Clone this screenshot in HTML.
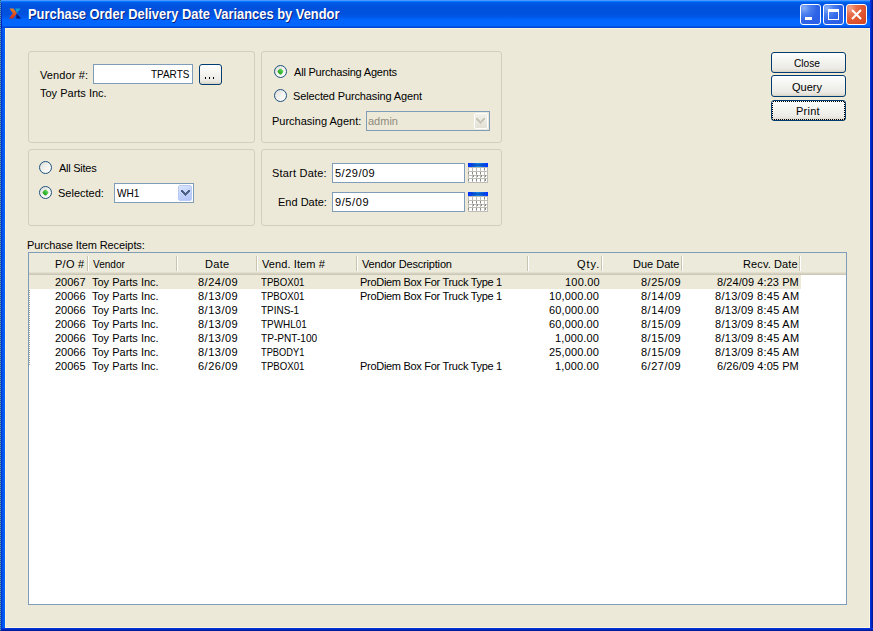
<!DOCTYPE html>
<html><head><meta charset="utf-8">
<style>
*{box-sizing:border-box;margin:0;padding:0}
html,body{width:873px;height:631px;overflow:hidden;background:#ECE9D8}
body{position:relative;font-family:"Liberation Sans",sans-serif;font-size:11px;color:#000}
.a{position:absolute}
.t{position:absolute;white-space:pre;line-height:14px;font-size:11px}
#frame{left:0;top:0;width:873px;height:631px;background:#0055E5}
#lb{left:0;top:28px;width:5px;height:603px;background:linear-gradient(90deg,#001ccf 0,#001ccf 1px,#0038dc 1px,#0038dc 2px,#0050e8 2px,#0050e8 3px,#005ff8 3px,#005ff8 5px)}
#dots{left:0;top:0;width:1px;height:631px;background:repeating-linear-gradient(180deg,#1E5A8E 0,#1E5A8E 1px,#5C9AD0 1px,#5C9AD0 2px)}
#rb{left:870px;top:0;width:3px;height:631px;background:linear-gradient(90deg,#0034e0 0,#0034e0 1px,#0026bf 1px,#0026bf 2px,#001a9a 2px,#001a9a 3px)}
#bb{left:1px;top:628px;width:872px;height:3px;background:linear-gradient(180deg,#0034dd 0,#0034dd 1px,#0028c0 1px,#0028c0 2px,#001a9e 2px)}
#title{left:0;top:0;width:873px;height:28px;background:linear-gradient(180deg,#4b97ff 0,#4b97ff 1px,#0a77ff 1px,#0a77ff 2px,#0060f2 2px,#0055e2 4px,#0051dc 8px,#0052de 14px,#0058ea 17px,#0066ff 20px,#0066ff 26px,#0046d4 27px,#0046d4 28px)}
#client{left:5px;top:28px;width:865px;height:600px;background:#ECE9D8;border:1px solid #FBF4DC}
.grp{position:absolute;border:1px solid #D0D0BF;border-radius:3px}
.inp{position:absolute;background:#fff;border:1px solid #7F9DB9}
.btn{position:absolute;border:1px solid #003C74;border-radius:3px;background:linear-gradient(180deg,#fff 0,#F4F4F0 40%,#ECEBE6 80%,#E3E0D5 92%,#D6D0C5 100%);box-shadow:0 0 0 1px rgba(255,240,200,.35)}
.radio{position:absolute;width:13px;height:13px;border-radius:50%;border:1px solid #1C5180;background:linear-gradient(135deg,#DCDCD7 0,#F2F2EE 50%,#fff 100%)}
.radio.on::after{content:"";position:absolute;left:3px;top:3px;width:5px;height:5px;border-radius:1.5px;transform:rotate(45deg);background:linear-gradient(180deg,#6BD866,#18A015)}
.tb{position:absolute;top:4px;width:21px;height:21px;border:1px solid #fff;border-radius:3px}
.tbb{background:radial-gradient(circle at 3px 3px,#8AB0F8 0,#4E82F0 6px,#2E63E6 13px,#2A5FE8 100%)}
.hsep{position:absolute;top:256px;width:2px;height:15px;background:linear-gradient(90deg,#C7C5B2 0,#C7C5B2 1px,#fff 1px)}
</style></head><body>
<div id="frame" class="a"></div>
<div id="title" class="a"></div>
<div id="lb" class="a"></div>
<div id="dots" class="a"></div>
<div class="a" style="left:1px;top:3px;width:1px;height:25px;background:linear-gradient(180deg,#0040d8,#0018c0)"></div>
<div id="rb" class="a"></div>
<div id="bb" class="a"></div>
<div id="client" class="a"></div>

<svg class="a" style="left:9px;top:8px" width="13" height="11" viewBox="0 -0.5 13 11">
<defs><linearGradient id="og" x1="0" y1="0" x2="0" y2="1"><stop offset="0" stop-color="#EC8420"/><stop offset="1" stop-color="#D82818"/></linearGradient></defs>
<polygon points="0.5,0 4.5,0 8,4.8 4,10 0,10 3.8,4.8" fill="url(#og)"/>
<polygon points="6.4,0 11.6,0 7.8,4.8" fill="#18A0D0"/>
<polygon points="7.4,5.2 12.4,10 7.4,10" fill="#0A1A78"/>
</svg>
<div class="t" style="left:28px;top:6px;font-weight:bold;font-size:14px;line-height:16px;transform:scaleX(0.92);transform-origin:0 0;color:#fff;text-shadow:1px 1px 0 #0A1E7A">Purchase Order Delivery Date Variances by Vendor</div>

<div class="tb tbb" style="left:800px"><div class="a" style="left:4px;top:12px;width:7px;height:3px;background:#fff"></div></div>
<div class="tb tbb" style="left:823px"><div class="a" style="left:4px;top:4px;width:11px;height:11px;border:1px solid #fff;border-top-width:3px"></div></div>
<div class="tb" style="left:846px;background:radial-gradient(circle at 3px 3px,#F4A890 0,#E8704E 6px,#E25A34 12px,#D0421C 100%)">
<svg class="a" style="left:4px;top:4px" width="11" height="11" viewBox="0 0 11 11"><path d="M1 1L10 10M10 1L1 10" stroke="#fff" stroke-width="2"/></svg></div>

<div class="grp" style="left:28px;top:51px;width:227px;height:92px"></div>
<div class="grp" style="left:261px;top:51px;width:241px;height:92px"></div>
<div class="grp" style="left:28px;top:149px;width:227px;height:77px"></div>
<div class="grp" style="left:261px;top:149px;width:241px;height:77px"></div>

<div class="inp" style="left:93px;top:64px;width:100px;height:20px"></div>
<div class="btn" style="left:199px;top:64px;width:23px;height:21px"><div class="a" style="left:5px;top:12px;width:1px;height:2px;background:#000"></div><div class="a" style="left:9px;top:12px;width:1px;height:2px;background:#000"></div><div class="a" style="left:13px;top:12px;width:1px;height:2px;background:#000"></div></div>

<div class="radio on" style="left:274px;top:65px"></div>
<div class="radio" style="left:274px;top:89px"></div>
<div class="inp" style="left:366px;top:111px;width:124px;height:20px;background:#ECE9D8"></div>
<div class="a" style="left:474px;top:113px;width:14px;height:16px;border:1px solid #fff;border-radius:2px;background:linear-gradient(180deg,#F2F1EA,#E3E1D6)"></div>
<svg class="a" style="left:476px;top:118px" width="9" height="6" shape-rendering="crispEdges"><rect x="0" y="0" width="2" height="1" fill="#C9C7BA"/><rect x="7" y="0" width="2" height="1" fill="#C9C7BA"/><rect x="0" y="1" width="3" height="1" fill="#C9C7BA"/><rect x="6" y="1" width="3" height="1" fill="#C9C7BA"/><rect x="1" y="2" width="3" height="1" fill="#C9C7BA"/><rect x="5" y="2" width="3" height="1" fill="#C9C7BA"/><rect x="2" y="3" width="5" height="1" fill="#C9C7BA"/><rect x="3" y="4" width="3" height="1" fill="#C9C7BA"/><rect x="4" y="5" width="1" height="1" fill="#C9C7BA"/></svg>

<div class="radio" style="left:39px;top:161px"></div>
<div class="radio on" style="left:39px;top:186px"></div>
<div class="inp" style="left:114px;top:183px;width:80px;height:20px"></div>
<div class="a" style="left:178px;top:185px;width:14px;height:16px;border:1px solid #BACCF6;border-radius:2px;background:linear-gradient(160deg,#DCE6FE 0,#C6D5FB 40%,#B3C6F8 100%)"></div>
<svg class="a" style="left:181px;top:190px" width="9" height="6" shape-rendering="crispEdges"><rect x="0" y="0" width="2" height="1" fill="#4D6185"/><rect x="7" y="0" width="2" height="1" fill="#4D6185"/><rect x="0" y="1" width="3" height="1" fill="#4D6185"/><rect x="6" y="1" width="3" height="1" fill="#4D6185"/><rect x="1" y="2" width="3" height="1" fill="#4D6185"/><rect x="5" y="2" width="3" height="1" fill="#4D6185"/><rect x="2" y="3" width="5" height="1" fill="#4D6185"/><rect x="3" y="4" width="3" height="1" fill="#4D6185"/><rect x="4" y="5" width="1" height="1" fill="#4D6185"/></svg>

<div class="inp" style="left:332px;top:163px;width:133px;height:20px"></div>
<div class="inp" style="left:332px;top:192px;width:133px;height:20px"></div>
<svg class="a" style="left:468px;top:163px" width="20" height="20" viewBox="0 0 20 20" shape-rendering="crispEdges"><defs><linearGradient id="cg" x1="0" y1="0" x2="1" y2="0"><stop offset="0" stop-color="#0028F8"/><stop offset=".5" stop-color="#1488E0"/><stop offset="1" stop-color="#0030FF"/></linearGradient></defs><rect x="0" y="0" width="20" height="20" fill="#fff"/><rect x="0" y="0" width="20" height="4" fill="url(#cg)"/><rect x="3" y="1" width="14" height="2" fill="#0A3AA0" opacity=".45"/><rect x="0" y="4" width="20" height="1" fill="#BDBDB5"/><rect x="0" y="8" width="20" height="1" fill="#BDBDB5"/><rect x="0" y="12" width="20" height="1" fill="#BDBDB5"/><rect x="0" y="15" width="20" height="1" fill="#BDBDB5"/><rect x="0" y="19" width="20" height="1" fill="#BDBDB5"/><rect x="0" y="4" width="1" height="16" fill="#BDBDB5"/><rect x="4" y="4" width="1" height="16" fill="#BDBDB5"/><rect x="8" y="4" width="1" height="16" fill="#BDBDB5"/><rect x="12" y="4" width="1" height="16" fill="#BDBDB5"/><rect x="16" y="4" width="1" height="16" fill="#BDBDB5"/><rect x="19" y="4" width="1" height="16" fill="#BDBDB5"/><rect x="16" y="5" width="1" height="2" fill="#8A8A86"/><rect x="0" y="9" width="1" height="2" fill="#8A8A86"/><rect x="4" y="9" width="1" height="2" fill="#8A8A86"/><rect x="8" y="9" width="1" height="2" fill="#8A8A86"/><rect x="12" y="9" width="1" height="2" fill="#8A8A86"/><rect x="5" y="12" width="1" height="2" fill="#8A8A86"/><rect x="9" y="12" width="1" height="2" fill="#8A8A86"/><rect x="13" y="12" width="1" height="2" fill="#8A8A86"/><rect x="17" y="12" width="1" height="2" fill="#8A8A86"/><rect x="0" y="16" width="1" height="2" fill="#8A8A86"/><rect x="4" y="16" width="1" height="2" fill="#8A8A86"/><rect x="8" y="16" width="1" height="2" fill="#8A8A86"/><rect x="12" y="16" width="1" height="2" fill="#8A8A86"/><rect x="17" y="16" width="1" height="2" fill="#8A8A86"/></svg><svg class="a" style="left:468px;top:192px" width="20" height="20" viewBox="0 0 20 20" shape-rendering="crispEdges"><defs><linearGradient id="cg" x1="0" y1="0" x2="1" y2="0"><stop offset="0" stop-color="#0028F8"/><stop offset=".5" stop-color="#1488E0"/><stop offset="1" stop-color="#0030FF"/></linearGradient></defs><rect x="0" y="0" width="20" height="20" fill="#fff"/><rect x="0" y="0" width="20" height="4" fill="url(#cg)"/><rect x="3" y="1" width="14" height="2" fill="#0A3AA0" opacity=".45"/><rect x="0" y="4" width="20" height="1" fill="#BDBDB5"/><rect x="0" y="8" width="20" height="1" fill="#BDBDB5"/><rect x="0" y="12" width="20" height="1" fill="#BDBDB5"/><rect x="0" y="15" width="20" height="1" fill="#BDBDB5"/><rect x="0" y="19" width="20" height="1" fill="#BDBDB5"/><rect x="0" y="4" width="1" height="16" fill="#BDBDB5"/><rect x="4" y="4" width="1" height="16" fill="#BDBDB5"/><rect x="8" y="4" width="1" height="16" fill="#BDBDB5"/><rect x="12" y="4" width="1" height="16" fill="#BDBDB5"/><rect x="16" y="4" width="1" height="16" fill="#BDBDB5"/><rect x="19" y="4" width="1" height="16" fill="#BDBDB5"/><rect x="16" y="5" width="1" height="2" fill="#8A8A86"/><rect x="0" y="9" width="1" height="2" fill="#8A8A86"/><rect x="4" y="9" width="1" height="2" fill="#8A8A86"/><rect x="8" y="9" width="1" height="2" fill="#8A8A86"/><rect x="12" y="9" width="1" height="2" fill="#8A8A86"/><rect x="5" y="12" width="1" height="2" fill="#8A8A86"/><rect x="9" y="12" width="1" height="2" fill="#8A8A86"/><rect x="13" y="12" width="1" height="2" fill="#8A8A86"/><rect x="17" y="12" width="1" height="2" fill="#8A8A86"/><rect x="0" y="16" width="1" height="2" fill="#8A8A86"/><rect x="4" y="16" width="1" height="2" fill="#8A8A86"/><rect x="8" y="16" width="1" height="2" fill="#8A8A86"/><rect x="12" y="16" width="1" height="2" fill="#8A8A86"/><rect x="17" y="16" width="1" height="2" fill="#8A8A86"/></svg>

<div class="btn" style="left:771px;top:52px;width:75px;height:21px"></div>
<div class="btn" style="left:771px;top:75px;width:75px;height:22px"></div>
<div class="btn" style="left:771px;top:100px;width:75px;height:21px"><svg class="a" style="left:0;top:0" width="73" height="19" shape-rendering="crispEdges"><rect x="0.5" y="0.5" width="72" height="18" fill="none" stroke="#000" stroke-dasharray="1 1"/></svg></div>

<div class="a" style="left:28px;top:252px;width:819px;height:353px;border:1px solid #7F9DB9;background:#fff"></div>
<div class="a" style="left:29px;top:253px;width:817px;height:19px;background:#EBEADB"></div>
<div class="a" style="left:29px;top:272px;width:817px;height:3px;background:linear-gradient(180deg,#E2DFCF 0,#E2DFCF 1px,#D6D3C2 1px,#D6D3C2 2px,#CBC7B6 2px)"></div>
<div class="a" style="left:29px;top:275px;width:772px;height:14px;background:#ECE9D8"></div>
<div class="a" style="left:29px;top:290px;width:1px;height:76px;background:repeating-linear-gradient(180deg,#A8A491 0,#A8A491 1px,transparent 1px,transparent 2px)"></div>
<div class="hsep" style="left:87px"></div>
<div class="hsep" style="left:176px"></div>
<div class="hsep" style="left:256px"></div>
<div class="hsep" style="left:356px"></div>
<div class="hsep" style="left:527px"></div>
<div class="hsep" style="left:601px"></div>
<div class="hsep" style="left:681px"></div>
<div class="hsep" style="left:799px"></div>
<div class="t" style="left:40px;top:68px;letter-spacing:0.125px">Vendor #:</div>
<div class="t" style="left:151px;top:67px;transform:scaleX(0.9048);transform-origin:0 0">TPARTS</div>
<div class="t" style="left:40px;top:86px">Toy Parts Inc.</div>
<div class="t" style="left:294px;top:65px;letter-spacing:-0.2px">All Purchasing Agents</div>
<div class="t" style="left:293px;top:89px;letter-spacing:-0.125px">Selected Purchasing Agent</div>
<div class="t" style="left:272px;top:114px">Purchasing Agent:</div>
<div class="t" style="left:368px;top:114px;color:#8F8B7E">admin</div>
<div class="t" style="left:59px;top:161px;letter-spacing:-0.25px">All Sites</div>
<div class="t" style="left:58px;top:186px">Selected:</div>
<div class="t" style="left:117px;top:186px;transform:scaleX(0.9167);transform-origin:0 0">WH1</div>
<div class="t" style="left:272px;top:166px;letter-spacing:0.2px">Start Date:</div>
<div class="t" style="left:278px;top:195px">End Date:</div>
<div class="t" style="left:335px;top:166px;letter-spacing:0.5px">5/29/09</div>
<div class="t" style="left:335px;top:195px;letter-spacing:0.6px">9/5/09</div>
<div class="t" style="left:794px;top:56px;transform:scaleX(0.9259);transform-origin:0 0">Close</div>
<div class="t" style="left:792px;top:80px">Query</div>
<div class="t" style="left:796px;top:104px;letter-spacing:0.25px">Print</div>
<div class="t" style="left:27px;top:238px;letter-spacing:-0.091px">Purchase Item Receipts:</div>
<div class="t" style="left:55px;top:257px;letter-spacing:0.25px">P/O #</div>
<div class="t" style="left:93px;top:257px;transform:scaleX(0.9143);transform-origin:0 0">Vendor</div>
<div class="t" style="left:205px;top:257px;letter-spacing:0.333px">Date</div>
<div class="t" style="left:262px;top:257px;letter-spacing:0.091px">Vend. Item #</div>
<div class="t" style="left:362px;top:257px;letter-spacing:-0.176px">Vendor Description</div>
<div class="t" style="left:577px;top:257px;letter-spacing:1.0px">Qty.</div>
<div class="t" style="left:633px;top:257px">Due Date</div>
<div class="t" style="left:743px;top:257px;letter-spacing:0.111px">Recv. Date</div>
<div class="t" style="left:55px;top:275px">20067</div>
<div class="t" style="left:92px;top:275px">Toy Parts Inc.</div>
<div class="t" style="left:198px;top:275px;letter-spacing:0.5px">8/24/09</div>
<div class="t" style="left:261px;top:275px;transform:scaleX(0.8776);transform-origin:0 0">TPBOX01</div>
<div class="t" style="left:360px;top:275px;letter-spacing:-0.296px">ProDiem Box For Truck Type 1</div>
<div class="t" style="left:565px;top:275px;letter-spacing:0.2px">100.00</div>
<div class="t" style="left:641px;top:275px;letter-spacing:0.5px">8/25/09</div>
<div class="t" style="left:717px;top:275px;letter-spacing:0.071px">8/24/09 4:23 PM</div>
<div class="t" style="left:55px;top:289px">20066</div>
<div class="t" style="left:92px;top:289px">Toy Parts Inc.</div>
<div class="t" style="left:198px;top:289px;letter-spacing:0.5px">8/13/09</div>
<div class="t" style="left:261px;top:289px;transform:scaleX(0.8776);transform-origin:0 0">TPBOX01</div>
<div class="t" style="left:360px;top:289px;letter-spacing:-0.296px">ProDiem Box For Truck Type 1</div>
<div class="t" style="left:549px;top:289px;letter-spacing:0.125px">10,000.00</div>
<div class="t" style="left:641px;top:289px;letter-spacing:0.5px">8/14/09</div>
<div class="t" style="left:715px;top:289px;letter-spacing:0.286px">8/13/09 8:45 AM</div>
<div class="t" style="left:55px;top:303px">20066</div>
<div class="t" style="left:92px;top:303px">Toy Parts Inc.</div>
<div class="t" style="left:198px;top:303px;letter-spacing:0.5px">8/13/09</div>
<div class="t" style="left:261px;top:303px;transform:scaleX(0.9048);transform-origin:0 0">TPINS-1</div>
<div class="t" style="left:549px;top:303px;letter-spacing:0.125px">60,000.00</div>
<div class="t" style="left:641px;top:303px;letter-spacing:0.5px">8/14/09</div>
<div class="t" style="left:715px;top:303px;letter-spacing:0.286px">8/13/09 8:45 AM</div>
<div class="t" style="left:55px;top:317px">20066</div>
<div class="t" style="left:92px;top:317px">Toy Parts Inc.</div>
<div class="t" style="left:198px;top:317px;letter-spacing:0.5px">8/13/09</div>
<div class="t" style="left:261px;top:317px;transform:scaleX(0.9);transform-origin:0 0">TPWHL01</div>
<div class="t" style="left:549px;top:317px;letter-spacing:0.125px">60,000.00</div>
<div class="t" style="left:641px;top:317px;letter-spacing:0.5px">8/15/09</div>
<div class="t" style="left:715px;top:317px;letter-spacing:0.286px">8/13/09 8:45 AM</div>
<div class="t" style="left:55px;top:331px">20066</div>
<div class="t" style="left:92px;top:331px">Toy Parts Inc.</div>
<div class="t" style="left:198px;top:331px;letter-spacing:0.5px">8/13/09</div>
<div class="t" style="left:261px;top:331px;transform:scaleX(0.918);transform-origin:0 0">TP-PNT-100</div>
<div class="t" style="left:555px;top:331px;letter-spacing:0.143px">1,000.00</div>
<div class="t" style="left:641px;top:331px;letter-spacing:0.5px">8/15/09</div>
<div class="t" style="left:715px;top:331px;letter-spacing:0.286px">8/13/09 8:45 AM</div>
<div class="t" style="left:55px;top:345px">20066</div>
<div class="t" style="left:92px;top:345px">Toy Parts Inc.</div>
<div class="t" style="left:198px;top:345px;letter-spacing:0.5px">8/13/09</div>
<div class="t" style="left:261px;top:345px;transform:scaleX(0.8431);transform-origin:0 0">TPBODY1</div>
<div class="t" style="left:549px;top:345px;letter-spacing:0.125px">25,000.00</div>
<div class="t" style="left:641px;top:345px;letter-spacing:0.5px">8/15/09</div>
<div class="t" style="left:715px;top:345px;letter-spacing:0.286px">8/13/09 8:45 AM</div>
<div class="t" style="left:55px;top:359px">20065</div>
<div class="t" style="left:92px;top:359px">Toy Parts Inc.</div>
<div class="t" style="left:198px;top:359px;letter-spacing:0.5px">6/26/09</div>
<div class="t" style="left:261px;top:359px;transform:scaleX(0.8776);transform-origin:0 0">TPBOX01</div>
<div class="t" style="left:360px;top:359px;letter-spacing:-0.296px">ProDiem Box For Truck Type 1</div>
<div class="t" style="left:555px;top:359px;letter-spacing:0.143px">1,000.00</div>
<div class="t" style="left:641px;top:359px;letter-spacing:0.5px">6/27/09</div>
<div class="t" style="left:717px;top:359px;letter-spacing:0.071px">6/26/09 4:05 PM</div>
</body></html>
